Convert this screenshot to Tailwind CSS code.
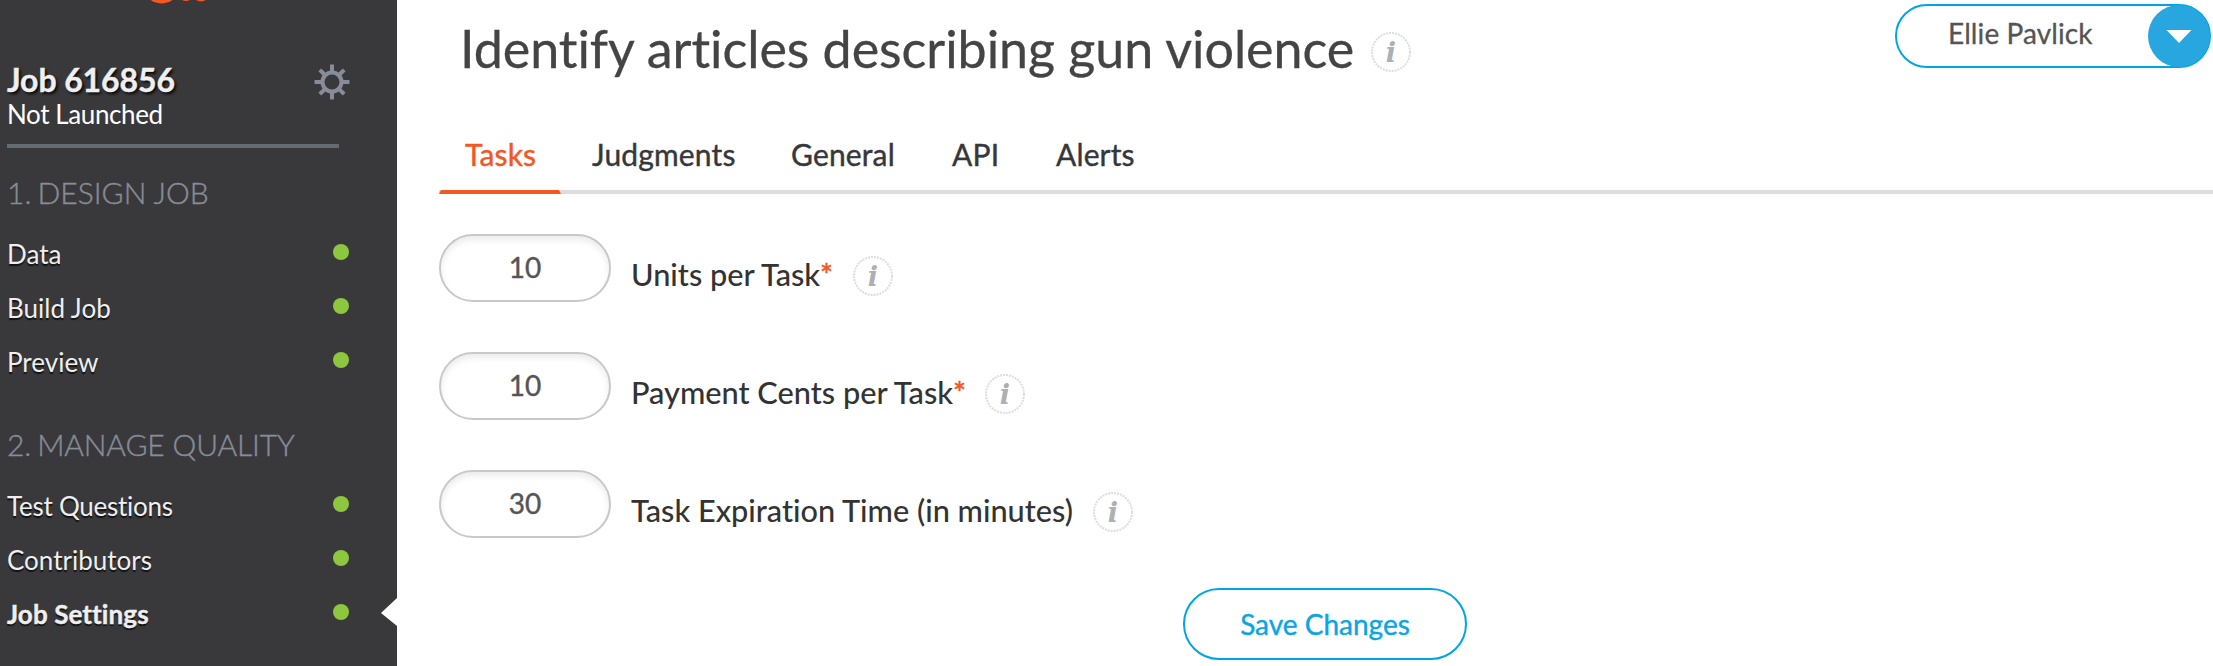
<!DOCTYPE html>
<html lang="en">
<head>
<meta charset="utf-8">
<title>Job Settings</title>
<script src="https://cdn.jsdelivr.net/npm/@tailwindcss/browser@4"></script>
</head>
<body class="bg-white overflow-hidden font-['Lato',sans-serif] [font-variant-ligatures:none]">
<div class="flex w-[2213px] h-[666px] overflow-hidden">
  <aside class="w-[397px] h-full shrink-0 bg-[#39393c] text-[#efefef] flex flex-col">
    <svg class="block ml-[140px] h-[61px] w-20 shrink-0" viewBox="0 0 80 61" fill="#f4571f"><circle cx="21.500" cy="-15" r="18.500"/><circle cx="46" cy="-7" r="8"/><circle cx="61" cy="-7" r="8.500"/></svg>
    <div class="flex justify-between pl-[7px] pr-12">
      <div>
        <h2 class="text-[32px] leading-[38px] font-bold tracking-[-0.1px] [-webkit-text-stroke:0.4px] text-shadow-[2px_2px_3px_rgb(0_0_0/0.9)]">Job 616856</h2>
        <p class="text-[26px] leading-[31px] tracking-[-0.4px] text-white">Not Launched</p>
      </div>
      <svg class="w-9 h-9 mt-[2.500px] -mr-px" viewBox="-18 -18 36 36" fill="none" stroke="#868c98" stroke-width="4"><circle r="9.500"/><path d="M0-17.500V-11M0 17.500V11M-17.500 0H-11M17.500 0H11M-12.200-12.200L-7.500-7.500M12.200-12.200L7.500-7.500M-12.200 12.200L-7.500 7.500M12.200 12.200L7.500 7.500"/></svg>
    </div>
    <div class="h-1 w-[332px] ml-[7px] mt-3.5 bg-[#656b72] shrink-0"></div>
    <h3 class="mt-[26px] mb-[17px] pl-[7px] text-[30px] leading-9 font-light [-webkit-text-stroke:0.4px] text-[#868c98]"><span class="-mr-0.5">1.</span> DESIGN JOB</h3>
    <ul class="pl-[7px] pr-12 text-[26px] leading-[54px] text-shadow-[0_2px_1px_rgb(0_0_0/0.7)]">
      <li class="flex justify-between"><span>Data</span><i class="size-4 mt-[17px] rounded-full bg-[#8dc63f]"></i></li>
      <li class="flex justify-between"><span>Build Job</span><i class="size-4 mt-[17px] rounded-full bg-[#8dc63f]"></i></li>
      <li class="flex justify-between"><span>Preview</span><i class="size-4 mt-[17px] rounded-full bg-[#8dc63f]"></i></li>
    </ul>
    <h3 class="mt-[37px] mb-[17px] pl-[7px] text-[30px] leading-9 font-light [-webkit-text-stroke:0.4px] tracking-[-0.13px] text-[#868c98]"><span class="-mr-0.5">2.</span> MANAGE QUALITY</h3>
    <ul class="pl-[7px] pr-12 text-[26px] leading-[54px] text-shadow-[0_2px_1px_rgb(0_0_0/0.7)]">
      <li class="flex justify-between"><span class="tracking-[-0.25px]">Test Questions</span><i class="size-4 mt-[17px] rounded-full bg-[#8dc63f]"></i></li>
      <li class="flex justify-between"><span>Contributors</span><i class="size-4 mt-[17px] rounded-full bg-[#8dc63f]"></i></li>
      <li class="flex justify-between relative font-bold [-webkit-text-stroke:0.4px]"><span class="tracking-[0.1px]">Job Settings</span><i class="size-4 mt-[17px] rounded-full bg-[#8dc63f]"></i>
        <svg class="absolute -right-12 top-[11px] w-4 h-7" viewBox="0 0 16 28"><path d="M16 0V28L0 15Z" fill="#fff"/></svg></li>
    </ul>
  </aside>
  <main class="flex-1 pl-[42px] flex flex-col">
    <header class="flex justify-between h-[115px]">
      <div class="flex pl-[21px]">
        <h1 class="text-[52px] leading-[62px] mt-[17px] tracking-[-0.05px] w-[892px] whitespace-nowrap text-[#444] [-webkit-text-stroke:0.3px]">Identify articles describing gun violence</h1>
        <svg class="w-10 h-10 mt-8 ml-[19px]" viewBox="0 0 40 40"><circle cx="20" cy="20" r="19" fill="none" stroke="#dcdde0" stroke-width="2" stroke-dasharray="2 1"/><text x="20" y="30" text-anchor="middle" font-family="DejaVu Serif" font-style="italic" font-weight="bold" font-size="27" fill="#adb0b3">i</text></svg>
      </div>
      <div class="mt-1 mr-0.5 w-[316px] h-16 border-2 border-[#00a5e5] rounded-full flex justify-between">
        <span class="pl-[51px] text-[28px] leading-[34px] mt-[10px] tracking-[0.1px] text-[#555] [-webkit-text-stroke:0.3px]">Ellie Pavlick</span>
        <svg class="w-[62px] h-[62px] -mt-px -mr-px" viewBox="0 0 62 62"><circle cx="31" cy="31" r="31" fill="#27a6df"/><path d="M18.500 25H43.500L31 38Z" fill="#fff"/></svg>
      </div>
    </header>
    <nav class="flex h-[79px] border-b-4 border-[#ddd] text-[30px] leading-9 text-[#36373a] tracking-[0.15px] [-webkit-text-stroke:0.4px]">
      <a class="w-[122px] h-[79px] border-b-4 border-[#f4571f] border-x-2 border-x-transparent pl-6 pt-[21px] text-[#f4571f]">Tasks</a>
      <a class="w-[200px] pl-[31px] pt-[21px]">Judgments</a>
      <a class="w-[160px] pl-[30px] pt-[21px]">General</a>
      <a class="w-[104px] pl-[31px] pt-[21px]">API</a>
      <a class="pl-[31px] pt-[21px]">Alerts</a>
    </nav>
    <form class="pt-10 flex flex-col gap-[50px]">
      <div class="flex h-[68px]">
        <div class="w-[172px] h-[68px] rounded-full border-2 border-[#c8c8c8] shadow-[inset_0_4px_6px_rgb(0_0_0/0.08)] text-center text-[28px] leading-[62px] text-[#555] [-webkit-text-stroke:0.4px]">10</div>
        <label class="ml-5 mt-[23px] w-[202px] whitespace-nowrap text-[30.7px] leading-9 font-medium text-[#333]">Units per Task<span class="text-[#f4571f] [-webkit-text-stroke:0.5px]">*</span></label>
        <svg class="w-10 h-10 mt-[22px] ml-5" viewBox="0 0 40 40"><circle cx="20" cy="20" r="19" fill="none" stroke="#dcdde0" stroke-width="2" stroke-dasharray="2 1"/><text x="20" y="30" text-anchor="middle" font-family="DejaVu Serif" font-style="italic" font-weight="bold" font-size="27" fill="#adb0b3">i</text></svg>
      </div>
      <div class="flex h-[68px]">
        <div class="w-[172px] h-[68px] rounded-full border-2 border-[#c8c8c8] shadow-[inset_0_4px_6px_rgb(0_0_0/0.08)] text-center text-[28px] leading-[62px] text-[#555] [-webkit-text-stroke:0.4px]">10</div>
        <label class="ml-5 mt-[23px] w-[334px] whitespace-nowrap text-[30.7px] leading-9 font-medium text-[#333]">Payment Cents per Task<span class="text-[#f4571f] [-webkit-text-stroke:0.5px]">*</span></label>
        <svg class="w-10 h-10 mt-[22px] ml-5" viewBox="0 0 40 40"><circle cx="20" cy="20" r="19" fill="none" stroke="#dcdde0" stroke-width="2" stroke-dasharray="2 1"/><text x="20" y="30" text-anchor="middle" font-family="DejaVu Serif" font-style="italic" font-weight="bold" font-size="27" fill="#adb0b3">i</text></svg>
      </div>
      <div class="flex h-[68px]">
        <div class="w-[172px] h-[68px] rounded-full border-2 border-[#c8c8c8] shadow-[inset_0_4px_6px_rgb(0_0_0/0.08)] text-center text-[28px] leading-[62px] text-[#555] [-webkit-text-stroke:0.4px]">30</div>
        <label class="ml-5 mt-[23px] w-[442px] whitespace-nowrap text-[30.7px] leading-9 font-medium text-[#333]">Task Expiration Time (in minutes)</label>
        <svg class="w-10 h-10 mt-[22px] ml-5" viewBox="0 0 40 40"><circle cx="20" cy="20" r="19" fill="none" stroke="#dcdde0" stroke-width="2" stroke-dasharray="2 1"/><text x="20" y="30" text-anchor="middle" font-family="DejaVu Serif" font-style="italic" font-weight="bold" font-size="27" fill="#adb0b3">i</text></svg>
      </div>
    </form>
    <button class="mt-[50px] ml-[744px] w-[284px] h-[72px] rounded-full border-2 border-[#00a5e5] text-[28px] leading-[68px] text-[#0ba4e4] [-webkit-text-stroke:0.4px]">Save Changes</button>
  </main>
</div>
</body>
</html>
